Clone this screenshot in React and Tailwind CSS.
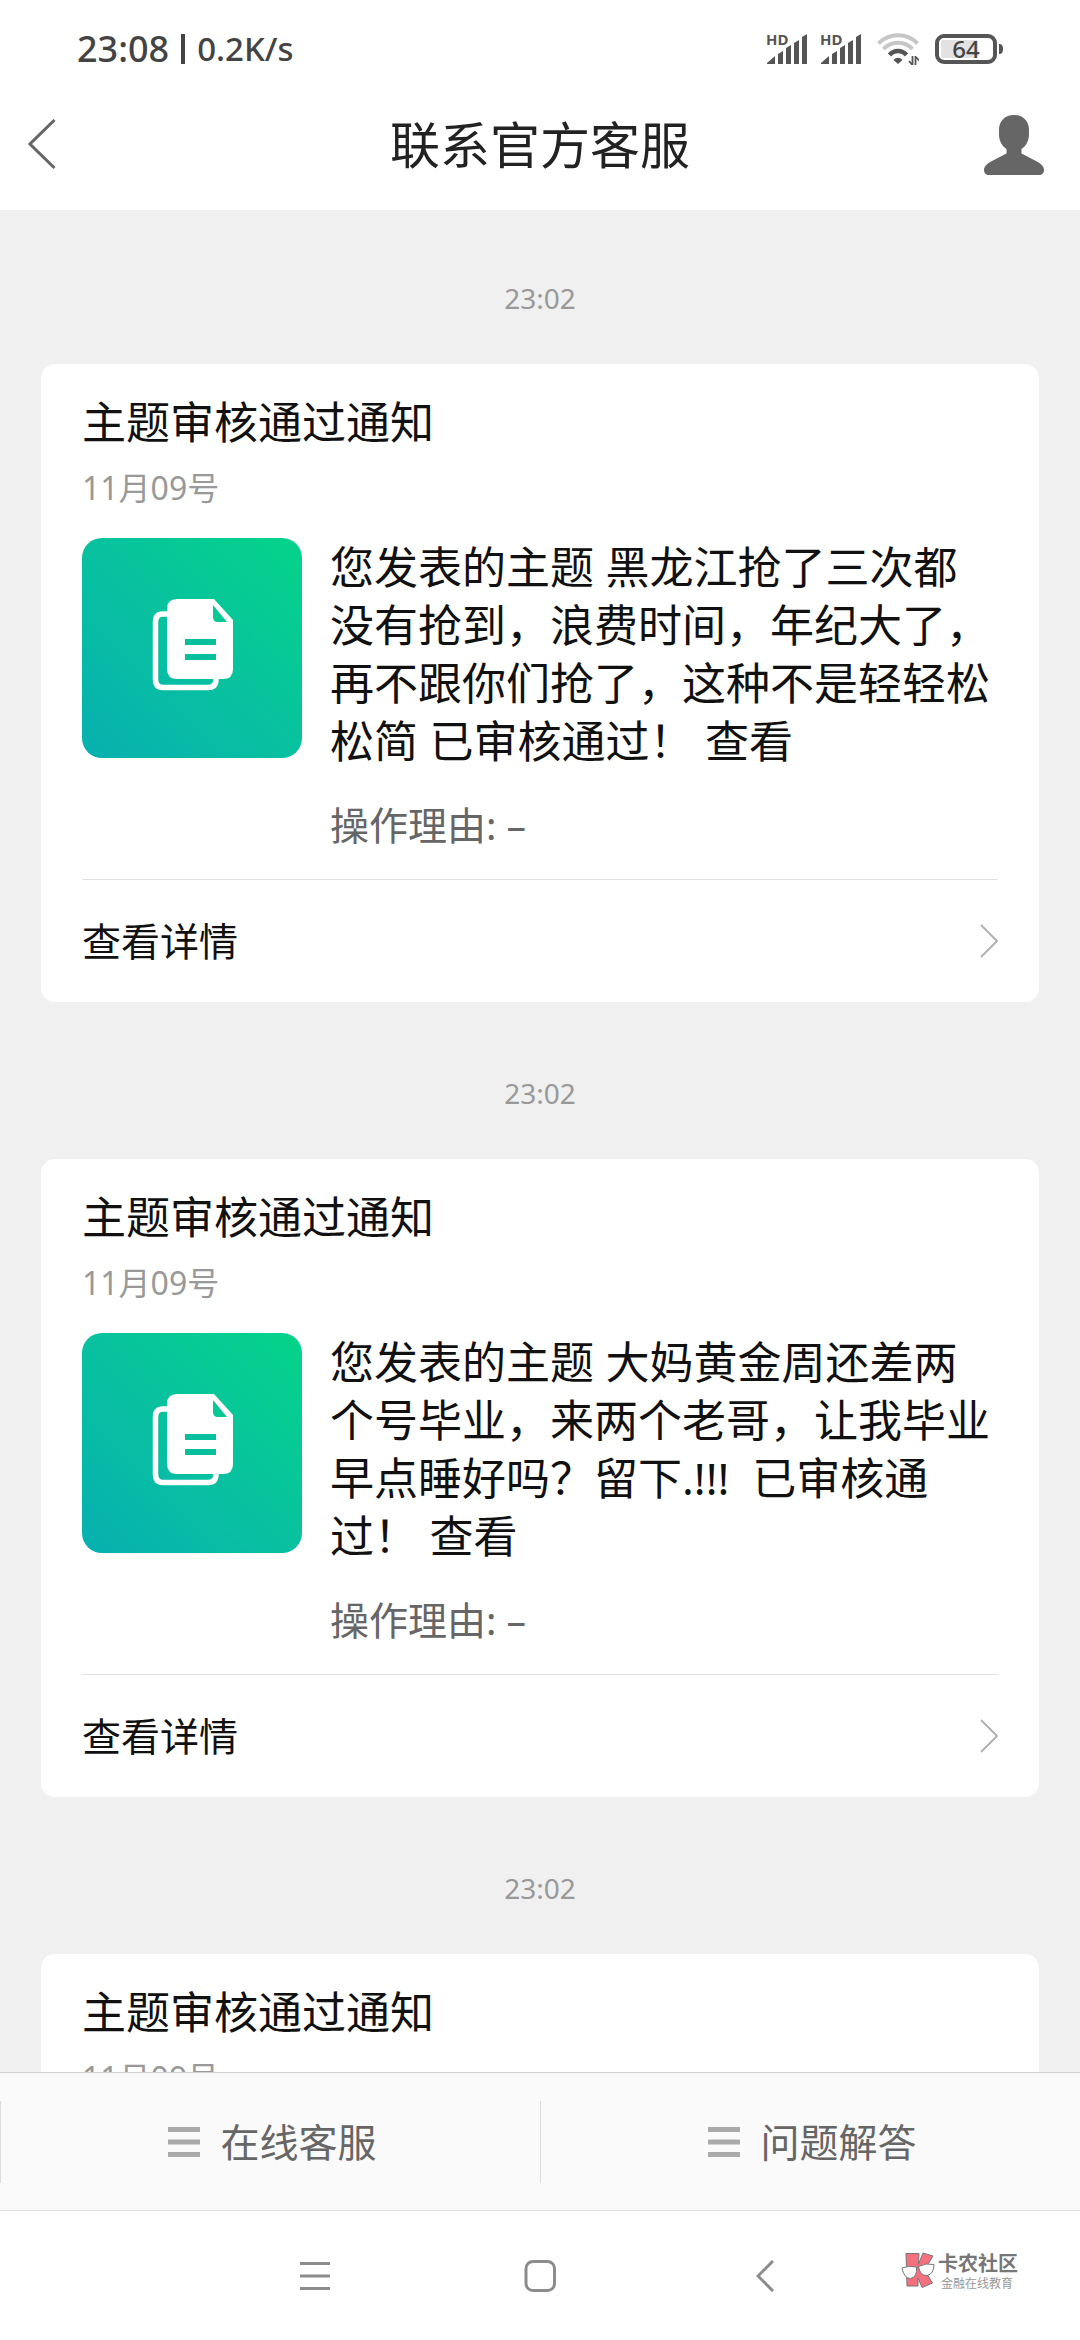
const messages = [
  {
    id: 1,
    time: '23:02',
    title: '主题审核通过通知',
    date: '11月09号',
    body: '您发表的主题 黑龙江抢了三次都没有抢到，浪费时间，年纪大了，再不跟你们抢了，这种不是轻轻松松简 已审核通过！ 查看',
    reason: '–',
  },
  {
    id: 2,
    time: '23:02',
    title: '主题审核通过通知',
    date: '11月09号',
    body: '您发表的主题 大妈黄金周还差两个号毕业，来两个老哥，让我毕业早点睡好吗？留下.!!!\u00a0 已审核通过！ 查看',
    reason: '–',
  },
  {
    id: 3,
    time: '23:02',
    title: '主题审核通过通知',
    date: '11月09号',
  },
];

const menus = ['在线客服', '问题解答'];

function SignalIcon() {
  return (
    <svg className="h-8 w-10 overflow-visible" viewBox="0 0 40 32" fill="#555">
      <text x="-1" y="12" fontSize="15" fontWeight="700">HD</text>
      <path d="M0 31V30L8 23V31Z" />
      <path d="M11 31V21L16 18V31Z" />
      <path d="M19 31V15L24 12V31Z" />
      <path d="M27 31V10L32 7V31Z" />
      <path d="M35 31V4L40 1V31Z" />
    </svg>
  );
}

function WifiIcon() {
  return (
    <svg className="h-8 w-[42px]" viewBox="0 0 42 32" fill="none">
      <path d="M1.5 10.5C12 -.5 30 -.5 40.5 10.5" stroke="#c6c6c6" strokeWidth="4" />
      <path d="M6.5 16C14 7.5 28 7.5 35.5 16" stroke="#c6c6c6" strokeWidth="4" />
      <path d="M12.5 22C17 16.5 25 16.5 29.5 22" stroke="#555" strokeWidth="4.5" />
      <path d="M16.5 27C19 24 23 24 25.5 27L21 31Z" fill="#555" />
      <path d="M35.5 23V32M38.5 32V23M35.5 32L32 28M38.5 23.5L42 27.5" stroke="#555" strokeWidth="1.8" />
    </svg>
  );
}

function BatteryIcon() {
  return (
    <svg className="h-[30px] w-[68px] overflow-visible" viewBox="0 0 68 30" fill="none">
      <rect x="6" y="6" width="37" height="18" rx="2" fill="#e2e2e2" />
      <rect x="2" y="2" width="58" height="26" rx="7" stroke="#555" strokeWidth="4" />
      <path d="M64 10C67 10 68 12 68 15S67 20 64 20Z" fill="#555" />
      <text x="31" y="24" fontSize="24" fontWeight="500" textAnchor="middle" fill="#444">64</text>
    </svg>
  );
}

function PersonIcon() {
  return (
    <svg className="size-[60px]" viewBox="0 0 60 60" fill="#666">
      <path d="M30 0C39 0 45 6 45 15V19C45 26 42 31 37.5 34V38.5L52 46C57 48.5 60 51.5 60 55C60 58 58 60 55 60H5C2 60 0 58 0 55C0 51.5 3 48.5 8 46L22.5 38.5V34C18 31 15 26 15 19V15C15 6 21 0 30 0Z" />
    </svg>
  );
}

function DocTile() {
  return (
    <div className="size-[220px] shrink-0 rounded-[20px] bg-linear-to-tr from-[#08b0b0] via-[#09c19f] to-[#05d488]">
      <svg className="size-full" viewBox="0 0 220 220" fill="none">
        <path d="M86 76H81Q73.5 76 73.5 84V141Q73.5 149.5 81 149.5H126Q134 149.5 134 141V140" stroke="#fff" strokeWidth="5.5" />
        <path d="M95 61H132L151 82V131Q151 141 141 141H95Q85 141 85 131V71Q85 61 95 61Z" fill="#fff" />
        <path d="M131 67L145 84H136Q131 84 131 79Z" fill="#08c996" />
        <path d="M103 104H134M103 119H134" stroke="#08bf9d" strokeWidth="6" />
      </svg>
    </div>
  );
}

function MenuLines() {
  return (
    <svg className="size-8" viewBox="0 0 32 32" fill="none" stroke="#aaa" strokeWidth="5">
      <path d="M0 3.5H32M0 16H32M0 28.5H32" />
    </svg>
  );
}

function MessageCard({ message }) {
  return (
    <article>
      <time className="mb-[46px] block text-center text-[28px] leading-[39px] text-[#999]">
        {message.time}
      </time>
      <div className="rounded-[14px] bg-white px-[41px] pt-[30px]">
        <h2 className="text-[44px] leading-[56px] text-[#111]">{message.title}</h2>
        <p className="mt-[18px] mb-[30px] text-[32px] leading-[40px] text-[#999]">{message.date}</p>
        {message.body && (
          <>
            <div className="flex gap-7">
              <DocTile />
              <div className="min-w-0 flex-1">
                <p className="text-[44px] leading-[58px] text-[#111]">{message.body}</p>
                <p className="mt-[26px] text-[39px] leading-[58px] text-[#666]">操作理由: {message.reason}</p>
              </div>
            </div>
            <a href="#detail" className="mt-[25px] flex h-[123px] items-center justify-between border-t border-[#e0e0e0]">
              <span className="text-[39px] leading-[58px] text-[#111]">查看详情</span>
              <svg className="h-9 w-[18px]" viewBox="0 0 18 36" fill="none" stroke="#b2b2b2" strokeWidth="2">
                <path d="M1 2L17 18L1 34" />
              </svg>
            </a>
          </>
        )}
      </div>
    </article>
  );
}

function Watermark() {
  return (
    <div className="absolute top-[41px] right-[62px] flex gap-[3px]">
      <svg className="h-9 w-[34px]" viewBox="0 0 34 36" stroke="#777" strokeWidth="1">
        <path d="M5 1.5H18L17.5 12L22 1L32 4L23.5 18L31.5 31L21 35.5L17 26V34H6Z" fill="#f5707f" />
        <path d="M1 16Q8 13 15.5 15Q16.5 25 9.5 26.5Q3 26.5 1 16Z" fill="#fff" />
        <path d="M17.5 14.5Q25 10.5 33 12.5Q33 22 26 23.5Q19 24 17.5 14.5Z" fill="#fff" />
        <path d="M15.5 16L17.5 15" fill="none" />
      </svg>
      <div>
        <p className="text-[20px] leading-6 font-bold text-[#777]">卡农社区</p>
        <p className="pl-[3px] text-[12px] leading-4 text-[#999]">金融在线教育</p>
      </div>
    </div>
  );
}

export default function App() {
  return (
    <div className="flex h-screen flex-col overflow-hidden bg-[#f0f0f0] font-['Noto_Sans','Noto_Sans_CJK_SC',sans-serif]">
      {/* Status bar */}
      <div className="flex h-20 shrink-0 items-center justify-between bg-white px-[77px] pt-[18px] font-medium text-[#444]">
        <div className="flex items-center gap-3">
          <span className="text-[36px] leading-[48px]">23:08</span>
          <span className="h-[30px] w-1 bg-[#444]" />
          <span className="text-[33px] leading-[48px]">0.2K/s</span>
        </div>
        <div className="flex items-center">
          <SignalIcon />
          <span className="ml-3.5"><SignalIcon /></span>
          <span className="ml-4"><WifiIcon /></span>
          <span className="ml-4"><BatteryIcon /></span>
        </div>
      </div>

      {/* Header */}
      <header className="grid h-[130px] shrink-0 grid-cols-[1fr_auto_1fr] items-center bg-white px-7">
        <button type="button" aria-label="返回" className="justify-self-start">
          <svg className="h-[52px] w-7" viewBox="0 0 28 52" fill="none" stroke="#666" strokeWidth="3">
            <path d="M26.5 1L2 25L26.5 49" />
          </svg>
        </button>
        <h1 className="text-[50px] leading-[64px] text-[#222]">联系官方客服</h1>
        <button type="button" aria-label="个人资料" className="justify-self-end pr-2">
          <PersonIcon />
        </button>
      </header>

      {/* Messages */}
      <main className="flex min-h-0 flex-1 flex-col gap-[72px] overflow-hidden px-[41px] pt-[69px]">
        {messages.map(message => (
          <MessageCard key={message.id} message={message} />
        ))}
      </main>

      {/* Service menu */}
      <div className="flex h-[139px] shrink-0 items-center border-y border-t-[#cfcfcf] border-b-[#e0e0e0] bg-[#fafafa]">
        {menus.map(label => (
          <button
            key={label}
            type="button"
            className="flex h-[82px] flex-1 items-center justify-center gap-5 border-l border-[#dcdcdc] pl-1 text-[39px] leading-[58px] text-[#666]"
          >
            <MenuLines />
            {label}
          </button>
        ))}
      </div>

      {/* System navigation */}
      <nav className="relative flex h-[129px] shrink-0 items-center justify-center gap-[125px] bg-white">
        <button type="button" aria-label="最近任务" className="flex w-[100px] justify-center">
          <svg className="size-8" viewBox="0 0 32 32" fill="none" stroke="#8c8c8c" strokeWidth="3">
            <path d="M1 3.5H31M1 16H31M1 28.5H31" />
          </svg>
        </button>
        <button type="button" aria-label="主屏幕" className="flex w-[100px] justify-center">
          <svg className="size-8" viewBox="0 0 32 32" fill="none" stroke="#8c8c8c" strokeWidth="3">
            <rect x="2" y="1.5" width="28.5" height="29" rx="7" />
          </svg>
        </button>
        <button type="button" aria-label="返回上一页" className="flex w-[100px] justify-center">
          <svg className="h-8 w-[18px]" viewBox="0 0 18 32" fill="none" stroke="#8c8c8c" strokeWidth="3">
            <path d="M17 1L2 16L17 31" />
          </svg>
        </button>
        <Watermark />
      </nav>
    </div>
  );
}
